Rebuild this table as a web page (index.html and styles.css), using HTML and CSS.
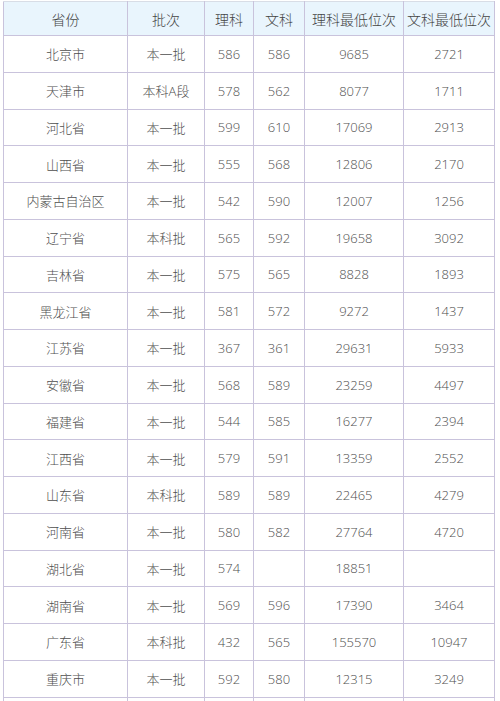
FILE: index.html
```html
<!DOCTYPE html>
<html>
<head>
<meta charset="utf-8">
<link rel="stylesheet" href="styles.css">
</head>
<body>
<table class="scores">
<colgroup>
<col class="c1"><col class="c2"><col class="c3"><col class="c4"><col class="c5"><col class="c6">
</colgroup>
<thead>
<tr><th>省份</th><th>批次</th><th>理科</th><th>文科</th><th>理科最低位次</th><th>文科最低位次</th></tr>
</thead>
<tbody>
<tr><td>北京市</td><td>本一批</td><td>586</td><td>586</td><td>9685</td><td>2721</td></tr>
<tr><td>天津市</td><td>本科A段</td><td>578</td><td>562</td><td>8077</td><td>1711</td></tr>
<tr><td>河北省</td><td>本一批</td><td>599</td><td>610</td><td>17069</td><td>2913</td></tr>
<tr><td>山西省</td><td>本一批</td><td>555</td><td>568</td><td>12806</td><td>2170</td></tr>
<tr><td>内蒙古自治区</td><td>本一批</td><td>542</td><td>590</td><td>12007</td><td>1256</td></tr>
<tr><td>辽宁省</td><td>本科批</td><td>565</td><td>592</td><td>19658</td><td>3092</td></tr>
<tr><td>吉林省</td><td>本一批</td><td>575</td><td>565</td><td>8828</td><td>1893</td></tr>
<tr><td>黑龙江省</td><td>本一批</td><td>581</td><td>572</td><td>9272</td><td>1437</td></tr>
<tr><td>江苏省</td><td>本一批</td><td>367</td><td>361</td><td>29631</td><td>5933</td></tr>
<tr><td>安徽省</td><td>本一批</td><td>568</td><td>589</td><td>23259</td><td>4497</td></tr>
<tr><td>福建省</td><td>本一批</td><td>544</td><td>585</td><td>16277</td><td>2394</td></tr>
<tr><td>江西省</td><td>本一批</td><td>579</td><td>591</td><td>13359</td><td>2552</td></tr>
<tr><td>山东省</td><td>本科批</td><td>589</td><td>589</td><td>22465</td><td>4279</td></tr>
<tr><td>河南省</td><td>本一批</td><td>580</td><td>582</td><td>27764</td><td>4720</td></tr>
<tr><td>湖北省</td><td>本一批</td><td>574</td><td></td><td>18851</td><td></td></tr>
<tr><td>湖南省</td><td>本一批</td><td>569</td><td>596</td><td>17390</td><td>3464</td></tr>
<tr><td>广东省</td><td>本科批</td><td>432</td><td>565</td><td>155570</td><td>10947</td></tr>
<tr><td>重庆市</td><td>本一批</td><td>592</td><td>580</td><td>12315</td><td>3249</td></tr>
<tr><td>&nbsp;</td><td></td><td></td><td></td><td></td><td></td></tr>
</tbody>
</table>
</body>
</html>
```
FILE: styles.css
```css
html, body {
  margin: 0;
  padding: 0;
  background: #ffffff;
  overflow: hidden;
}
body {
  padding: 1px 0 0 3px;
  font-family: "Open Sans", "Noto Sans CJK SC", "Noto Sans", sans-serif;
  color: #555555;
}
.scores {
  border-collapse: collapse;
  table-layout: fixed;
  width: 491px;
}
.c1 { width: 124px; }
.c2 { width: 77px; }
.c3 { width: 49px; }
.c4 { width: 51px; }
.c5 { width: 99px; }
.c6 { width: 91px; }
.scores th,
.scores td {
  border: 1px solid #c9c3dc;
  text-align: center;
  padding: 0;
  white-space: nowrap;
  overflow: hidden;
}
.scores th {
  height: 33px;
  background: #e9f5fd;
  font-weight: 300;
  font-size: 14px;
  color: #444444;
  border-top-color: #d8dde6;
}
.scores td {
  height: 35.76px;
  font-size: 13px;
  font-weight: 300;
  color: #4e4e4e;
}
```
